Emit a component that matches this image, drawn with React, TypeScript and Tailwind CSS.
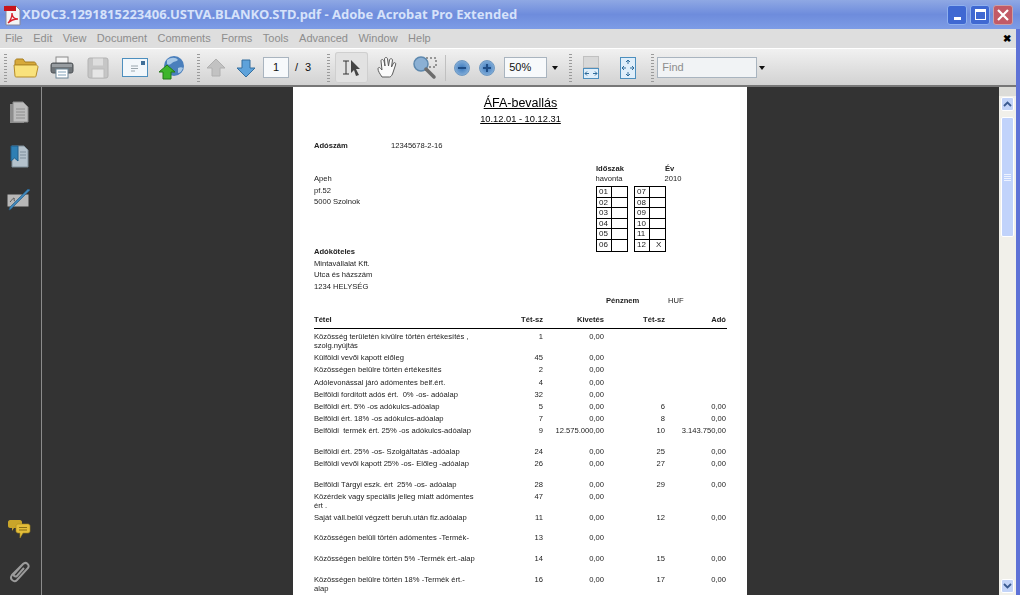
const menus = ['File', 'Edit', 'View', 'Document', 'Comments', 'Forms', 'Tools', 'Advanced', 'Window', 'Help']

type Row = { h: string; label: string; a?: string; b?: string; c?: string; d?: string }

const rows: Row[] = [
  { h: 'h-[21px]', label: 'Közösség területén kívülre történ értékesítés , szolg.nyújtás', a: '1', b: '0,00' },
  { h: 'h-[12px]', label: 'Külföldi vevői kapott előleg', a: '45', b: '0,00' },
  { h: 'h-[13px]', label: 'Közösségen belülre történ értékesítés', a: '2', b: '0,00' },
  { h: 'h-[12px]', label: 'Adólevonással járó adómentes belf.ért.', a: '4', b: '0,00' },
  { h: 'h-[12px]', label: 'Belföldi fordított adós ért.  0% -os- adóalap', a: '32', b: '0,00' },
  { h: 'h-[12px]', label: 'Belföldi ért. 5% -os adókulcs-adóalap', a: '5', b: '0,00', c: '6', d: '0,00' },
  { h: 'h-[12px]', label: 'Belföldi ért. 18% -os adókulcs-adóalap', a: '7', b: '0,00', c: '8', d: '0,00' },
  { h: 'h-[21px]', label: 'Belföldi  termék ért. 25% -os adókulcs-adóalap', a: '9', b: '12.575.000,00', c: '10', d: '3.143.750,00' },
  { h: 'h-[12px]', label: 'Belföldi ért. 25% -os- Szolgáltatás -adóalap', a: '24', b: '0,00', c: '25', d: '0,00' },
  { h: 'h-[21px]', label: 'Belföldi vevői kapott 25% -os- Előleg -adóalap', a: '26', b: '0,00', c: '27', d: '0,00' },
  { h: 'h-[12px]', label: 'Belföldi Tárgyi eszk. ért  25% -os- adóalap', a: '28', b: '0,00', c: '29', d: '0,00' },
  { h: 'h-[21px]', label: 'Közérdek vagy speciális jelleg miatt adómentes ért .', a: '47', b: '0,00' },
  { h: 'h-[20px]', label: 'Saját váll.belül végzett beruh.után fiz.adóalap', a: '11', b: '0,00', c: '12', d: '0,00' },
  { h: 'h-[21px]', label: 'Közösségen belüli történ adómentes -Termék-', a: '13', b: '0,00' },
  { h: 'h-[21px]', label: 'Közösségen belülre történ 5% -Termék ért.-alap', a: '14', b: '0,00', c: '15', d: '0,00' },
  { h: 'h-[21px]', label: 'Közösségen belülre történ 18% -Termék ért.-alap', a: '16', b: '0,00', c: '17', d: '0,00' },
]

const months = [['01', '07'], ['02', '08'], ['03', '09'], ['04', '10'], ['05', '11'], ['06', '12']]

function Grip() {
  return <div className="h-[28px] w-[3px] shrink-0 bg-[repeating-linear-gradient(to_bottom,#9a9a9a_0,#9a9a9a_1px,transparent_1px,transparent_3px)]" />
}

function AcrobatIcon() {
  return (
    <svg width="18" height="22" viewBox="0 0 18 22" className="shrink-0">
      <path d="M3 2h10l4 4v15H3z" fill="#f4f4f4" stroke="#8a8a9a" />
      <rect x="1" y="2" width="12" height="5" fill="#c8141c" />
      <path d="M5 19c3-3 4-7 4-10 0 4 2 6 6 6-4 0-7 1-10 4z" fill="none" stroke="#d8202a" strokeWidth="1.3" />
    </svg>
  )
}

function FolderIcon() {
  return (
    <svg width="26" height="21" viewBox="0 0 26 21">
      <path d="M2 4c0-1 1-2 2-2h6l2 3h9c1 0 2 1 2 2v1H2z" fill="#d7a93a" stroke="#a87e20" />
      <path d="M1 8h22c1 0 2 1 2 2l-2 9c0 1-1 1-2 1H4c-1 0-2 0-2-1z" fill="#f9e27c" stroke="#b58c2a" />
    </svg>
  )
}

function PrintIcon() {
  return (
    <svg width="24" height="23" viewBox="0 0 24 23">
      <rect x="6" y="1" width="12" height="7" fill="#f5f5f5" stroke="#8a8a8a" />
      <rect x="1" y="7" width="22" height="10" rx="2" fill="#6f7478" stroke="#4e5256" />
      <rect x="2" y="8" width="20" height="3" fill="#989da1" />
      <rect x="6" y="13" width="12" height="9" fill="#fff" stroke="#6f8798" />
      <path d="M8 16h8M8 19h8" stroke="#7fa0b8" />
    </svg>
  )
}

function SaveIcon() {
  return (
    <svg width="22" height="22" viewBox="0 0 22 22">
      <rect x="1" y="1" width="20" height="20" rx="2" fill="#c6c6c6" stroke="#b2b2b2" />
      <rect x="6" y="1.5" width="10" height="7" fill="#dedede" />
      <rect x="5" y="12" width="12" height="9" fill="#e6e6e6" stroke="#bcbcbc" />
    </svg>
  )
}

function MailIcon() {
  return (
    <svg width="26" height="19" viewBox="0 0 26 19">
      <rect x="0.5" y="0.5" width="25" height="18" fill="#f2f7fb" stroke="#4d8fbe" />
      <rect x="19" y="3" width="4" height="4" fill="#3f6f98" />
      <path d="M9 8h7M9 10.5h7M9 13h4" stroke="#9aa6ae" />
    </svg>
  )
}

function GlobeIcon() {
  return (
    <svg width="26" height="24" viewBox="0 0 26 24">
      <circle cx="15" cy="10" r="10" fill="#4a7fbc" />
      <path d="M8 4c4-3 9-3 11 0-2 2-4 1-6 3s-3 2-5 1zM19 12c2-1 4-1 5 0-1 3-3 5-5 5z" fill="#a8c8e6" />
      <path d="M8 9l8 7h-4v7H4v-7H0z" fill="#3fb52c" stroke="#237a16" />
    </svg>
  )
}

function ArrowIcon({ down, muted }: { down?: boolean; muted?: boolean }) {
  return (
    <svg width="20" height="20" viewBox="0 0 20 20" className={down ? 'rotate-180' : ''}>
      <path d="M10 1l9 9h-5v8H6v-8H1z" fill={muted ? '#c2c2c2' : '#5ea2da'} stroke={muted ? '#b0b0b0' : '#356f9f'} />
    </svg>
  )
}

function SelectIcon() {
  return (
    <svg width="20" height="18" viewBox="0 0 20 18">
      <path d="M1 2h6M1 15h6M4 2v13" stroke="#333" strokeWidth="1" fill="none" />
      <path d="M9 1l9 9h-4l3 6-3 1-2-6-3 3z" fill="#444" />
    </svg>
  )
}

function HandIcon() {
  return (
    <svg width="22" height="22" viewBox="0 0 22 22">
      <path d="M5 20C3 17 1 14 1 12s2-2 3 0l1 1-1-9c0-2 2-2 3 0l1 5-.5-7c0-2 3-2 3 0l1 7 1-6c.5-2 3-1.500 3 0l-1 7 2-4c1-1 3 0 2 2l-3 9c-1 2-2 3-3 3H8z" fill="#fafafa" stroke="#5c5c5c" />
    </svg>
  )
}

function MarqueeIcon() {
  return (
    <svg width="24" height="24" viewBox="0 0 24 24">
      <rect x="9" y="2" width="14" height="9" fill="none" stroke="#444" strokeDasharray="2 2" />
      <circle cx="8" cy="8" r="7" fill="#8bb0d4" stroke="#5d88ae" strokeWidth="1.5" />
      <path d="M13 13l8 8" stroke="#6c6c6c" strokeWidth="3.5" strokeLinecap="round" />
    </svg>
  )
}

function ZoomBtn({ plus }: { plus?: boolean }) {
  return (
    <div className="flex h-[16px] w-[16px] items-center justify-center rounded-full border border-[#6e98c2] bg-[radial-gradient(circle,#3a78bd,#9cc0e2)]">
      <span className="relative h-[2px] w-[8px] bg-[#1f4d86]">
        {plus && <span className="absolute left-[3px] top-[-3px] h-[8px] w-[2px] bg-[#1f4d86]" />}
      </span>
    </div>
  )
}

function FitWidthIcon() {
  return (
    <svg width="16" height="23" viewBox="0 0 16 23">
      <rect x="0.500" y="0.500" width="15" height="11" fill="#d8d8d8" stroke="#c0c0c0" />
      <rect x="0.500" y="12.500" width="15" height="10" fill="#dfeefa" stroke="#4d8fbe" />
      <path d="M2 17.500h4M14 17.500h-4M2 17.500l2-2M2 17.500l2 2M14 17.500l-2-2M14 17.500l-2 2" stroke="#2e6c9c" fill="none" />
    </svg>
  )
}

function FitPageIcon() {
  return (
    <svg width="16" height="22" viewBox="0 0 16 22">
      <rect x="0.500" y="0.500" width="15" height="21" fill="#dfeefa" stroke="#4d8fbe" />
      <path d="M8 3v4M6 5l2-2 2 2M8 19v-4M6 17l2 2 2-2M2 11h4M4 9l-2 2 2 2M14 11h-4M12 9l2 2-2 2" stroke="#2e6c9c" fill="none" />
    </svg>
  )
}

function Caret() {
  return <div className="h-0 w-0 border-x-[3.5px] border-t-[4px] border-x-transparent border-t-[#111]" />
}

function PagesNav() {
  return (
    <svg width="20" height="23" viewBox="0 0 20 23">
      <path d="M1 3h11l3 3v16H1z" fill="#8d8d8d" />
      <path d="M4 1h10l5 5v15H4z" fill="#bdbdbd" stroke="#8a8a8a" />
      <path d="M7 8h9M7 11h9M7 14h9M7 17h9" stroke="#8e8e8e" />
    </svg>
  )
}

function BookmarksNav() {
  return (
    <svg width="20" height="23" viewBox="0 0 20 23">
      <path d="M3 1h12l4 4v17H3z" fill="#b4c2cc" stroke="#7f8f9a" />
      <path d="M11 7h6M11 10h6M11 13h6" stroke="#7e8f9c" />
      <path d="M2 1h7v15l-3.500-3L2 16z" fill="#2e7fb4" stroke="#205f8a" />
    </svg>
  )
}

function SignNav() {
  return (
    <svg width="24" height="22" viewBox="0 0 24 22">
      <rect x="0.500" y="5.500" width="21" height="12" fill="#b8b8b8" />
      <path d="M3 13c2-2 3-4 4-4s-1 3 1 3" stroke="#555" fill="none" />
      <path d="M23 1L4 20l-2 1 1-3L21 0z" fill="#3f86b8" stroke="#2a5f88" strokeWidth="0.700" />
    </svg>
  )
}

function CommentsNav() {
  return (
    <svg width="24" height="20" viewBox="0 0 24 20">
      <path d="M3 1h10c1 0 2 1 2 2v4c0 1-1 2-2 2H7l-2 3V9H3C2 9 1 8 1 7V3c0-1 1-2 2-2z" fill="#c9a52a" />
      <path d="M11 5h10c1 0 2 1 2 2v5c0 1-1 2-2 2h-5l-3 5v-5h-2c-1 0-2-1-2-2V7c0-1 1-2 2-2z" fill="#e3bd3a" stroke="#a8891c" strokeWidth="0.600" />
      <path d="M12 8.500h8M12 11h8" stroke="#8a6f14" />
    </svg>
  )
}

function ClipNav() {
  return (
    <svg width="22" height="24" viewBox="0 0 22 24">
      <path d="M15 4L4 15c-3 4 2 8 5 5L20 8c2-3-2-7-5-4L6 14c-1 2 1 3 3 2l7-8" fill="none" stroke="#9b9b9b" strokeWidth="2" />
    </svg>
  )
}

function MonthTable({ col }: { col: 0 | 1 }) {
  return (
    <div className="w-[32px] border border-black">
      {months.map(m => (
        <div key={m[col]} className="grid h-[10.600px] grid-cols-[15px_1fr] border-b border-black text-[8px] leading-[9px] last:border-b-0">
          <div className="border-r border-black pl-[2px]">{m[col]}</div>
          <div className="pl-[6px]">{m[col] === '12' ? 'X' : ''}</div>
        </div>
      ))}
    </div>
  )
}

function PdfPage() {
  return (
    <div className="h-[508px] w-[454px] shrink-0 overflow-hidden bg-white pl-[21px] pr-[20px] text-[7.600px] leading-[9px] text-[#222] [font-family:'Liberation_Sans',Arial,sans-serif] blur-[0.25px]">
      <div className="pt-[9px] text-center">
        <div className="text-[12.500px] leading-[15px] text-black underline">ÁFA-bevallás</div>
        <div className="mt-[1px] text-[9.300px] leading-[14px] text-black underline">10.12.01 - 10.12.31</div>
      </div>

      <div className="mt-[15px] flex h-[10px]">
        <span className="w-[77px] font-bold">Adószám</span>
        <span>12345678-2-16</span>
      </div>

      <div className="flex">
        <div className="w-[282px] shrink-0 pt-[22px]">
          <div className="leading-[11.500px]">Apeh<br />pf.52<br />5000 Szolnok</div>
          <div className="mt-[38px] font-bold leading-[12px]">Adóköteles</div>
          <div className="leading-[11.500px]">Mintavállalat Kft.<br />Utca és házszám<br />1234 HELYSÉG</div>
        </div>
        <div className="pt-[13px]">
          <div className="flex h-[10px]">
            <span className="w-[69px] font-bold">Időszak</span>
            <span className="font-bold">Év</span>
          </div>
          <div className="flex h-[12px] -ml-[0.500px]">
            <span className="w-[69px]">havonta</span>
            <span>2010</span>
          </div>
          <div className="flex gap-[6px]">
            <MonthTable col={0} />
            <MonthTable col={1} />
          </div>
        </div>
      </div>

      <div className="mt-[4px] flex h-[10px] pl-[292px]">
        <span className="w-[62px] font-bold">Pénznem</span>
        <span>HUF</span>
      </div>

      <div className="mt-[9px] grid h-[14px] grid-cols-[170px_59px_61px_61px_61px] border-b border-black text-right font-bold">
        <span className="text-left">Tétel</span>
        <span>Tét-sz</span>
        <span>Kivetés</span>
        <span>Tét-sz</span>
        <span>Adó</span>
      </div>

      <div className="pt-[3px]">
        {rows.map(r => (
          <div key={r.label} className={`grid grid-cols-[170px_59px_61px_61px_61px] text-right ${r.h}`}>
            <span className="w-[165px] whitespace-pre-wrap text-left">{r.label}</span>
            <span>{r.a}</span>
            <span>{r.b}</span>
            <span>{r.c}</span>
            <span>{r.d}</span>
          </div>
        ))}
      </div>
    </div>
  )
}

function Scrollbar() {
  return (
    <div className="flex w-[17px] shrink-0 flex-col bg-[#f1f0ea] px-[2px]">
      <div className="-mx-[2px] h-[9px] bg-[#dcdcd8]" />
      <div className="mt-[1px] flex h-[14px] items-center justify-center rounded-[2px] border border-white bg-[#c3d4f8]">
        <svg width="9" height="6" viewBox="0 0 9 6"><path d="M1 5l3.500-3.500L8 5" fill="none" stroke="#3a5a90" strokeWidth="1.800" /></svg>
      </div>
      <div className="mt-[6px] flex h-[120px] flex-col items-center justify-center gap-[1px] rounded-[2px] border border-white bg-[#c1d3fb]">
        <div className="h-px w-[7px] bg-[#eef3ff]" />
        <div className="h-px w-[7px] bg-[#eef3ff]" />
        <div className="h-px w-[7px] bg-[#eef3ff]" />
        <div className="h-px w-[7px] bg-[#eef3ff]" />
      </div>
      <div className="flex-1" />
      <div className="mb-[2px] flex h-[14px] items-center justify-center rounded-[2px] border border-white bg-[#c3d4f8]">
        <svg width="9" height="6" viewBox="0 0 9 6"><path d="M1 1l3.500 3.500L8 1" fill="none" stroke="#3a5a90" strokeWidth="1.800" /></svg>
      </div>
    </div>
  )
}

export default function App() {
  return (
    <div className="flex h-[595px] w-[1020px] flex-col overflow-hidden bg-[#e0e0e0] [font-family:'Liberation_Sans',Arial,sans-serif]">
      {/* title bar */}
      <div className="flex h-[29px] shrink-0 items-center bg-gradient-to-b from-[#8fa8e4] via-[#6e8cdc] to-[#7d9ce6] pl-[3px] pr-[7px]">
        <AcrobatIcon />
        <span className="ml-[1px] text-[13px] font-bold text-[#d6e2fa] [font-family:'Noto_Sans',sans-serif]">XDOC3.1291815223406.USTVA.BLANKO.STD.pdf - Adobe Acrobat Pro Extended</span>
        <div className="ml-auto flex gap-[3px]">
          <div className="flex h-[20px] w-[20px] items-end justify-center rounded-[3px] border border-[#8fb0ee] bg-[#3f68d2] pb-[4px]">
            <div className="h-[3px] w-[7px] bg-white" />
          </div>
          <div className="flex h-[20px] w-[20px] items-center justify-center rounded-[3px] border border-[#8fb0ee] bg-[#3f68d2]">
            <div className="h-[11px] w-[11px] border border-t-[3px] border-white" />
          </div>
          <div className="flex h-[20px] w-[20px] items-center justify-center rounded-[3px] border border-[#c8a0a8] bg-[#c25a66]">
            <svg width="12" height="12" viewBox="0 0 12 12"><path d="M1 1l10 10M11 1L1 11" stroke="#fff" strokeWidth="2.200" /></svg>
          </div>
        </div>
      </div>

      <div className="flex min-h-0 flex-1">
        <div className="flex min-w-0 flex-1 flex-col">
          {/* menu bar */}
          <div className="flex h-[20px] shrink-0 items-center justify-between border-b border-white bg-[#dedede] pl-[5px] pr-[5px]">
            <div className="flex gap-[10.500px] text-[11px] text-[#8d8d8d]">
              {menus.map(m => <span key={m}>{m}</span>)}
            </div>
            <span className="text-[10px] font-bold leading-none text-black">✖</span>
          </div>

          {/* toolbar */}
          <div className="flex h-[38px] shrink-0 items-center border-b-2 border-[#777] bg-gradient-to-b from-[#f1f1f1] to-[#d2d2d2] pl-[4px] pt-[1px]">
            <Grip />
            <div className="ml-[6px] flex w-[184px] items-center gap-[11px]">
              <FolderIcon />
              <PrintIcon />
              <div className="ml-[2px]"><SaveIcon /></div>
              <div className="ml-[2px]"><MailIcon /></div>
              <GlobeIcon />
            </div>
            <Grip />
            <div className="ml-[6px] flex items-center gap-[10px]">
              <ArrowIcon muted />
              <ArrowIcon down />
            </div>
            <div className="ml-[7px] flex h-[21px] w-[26px] items-center justify-center border border-[#a9b4bf] bg-[#f7f9fb] text-[11px] text-[#111]">1</div>
            <span className="ml-[6px] text-[11px] tracking-[2px] text-[#111]">/ 3</span>
            <div className="ml-[14px]"><Grip /></div>
            <div className="ml-[5px] flex h-[31px] w-[33px] items-center justify-center rounded-[3px] bg-[#e2e2e2] shadow-[inset_0_0_0_1px_#cfcfcf]">
              <SelectIcon />
            </div>
            <div className="ml-[9px]"><HandIcon /></div>
            <div className="ml-[14px]"><MarqueeIcon /></div>
            <div className="ml-[8px] h-[26px] w-px bg-[#c0c0c0]" />
            <div className="ml-[8px]"><ZoomBtn /></div>
            <div className="ml-[9px]"><ZoomBtn plus /></div>
            <div className="ml-[9px] flex h-[21px] w-[43px] items-center border border-[#a9b4bf] bg-[#f7f9fb] pl-[4px] text-[11px] text-[#111]">50%</div>
            <div className="ml-[5px]"><Caret /></div>
            <div className="ml-[11px]"><Grip /></div>
            <div className="ml-[11px]"><FitWidthIcon /></div>
            <div className="ml-[21px]"><FitPageIcon /></div>
            <div className="ml-[15px]"><Grip /></div>
            <div className="ml-[3px] flex h-[21px] w-[100px] items-center border border-[#a9b4bf] bg-[#f1f3f5] pl-[4px] text-[11px] text-[#8d8d8d]">Find</div>
            <div className="ml-[2px]"><Caret /></div>
          </div>

          {/* main area */}
          <div className="flex min-h-0 flex-1 bg-[#333333]">
            <div className="flex w-[42px] shrink-0 flex-col items-center border-r border-[#8c8c8c] pb-[11px] pt-[14px] pr-[3px]">
              <PagesNav />
              <div className="mt-[21px]"><BookmarksNav /></div>
              <div className="mt-[21px]"><SignNav /></div>
              <div className="mt-auto"><CommentsNav /></div>
              <div className="mt-[21px]"><ClipNav /></div>
            </div>
            <div className="flex min-w-0 flex-1 justify-center pr-[1px]">
              <PdfPage />
            </div>
            <Scrollbar />
          </div>
        </div>
        <div className="w-[4px] shrink-0 bg-[#5e72d6]" />
      </div>
    </div>
  )
}
